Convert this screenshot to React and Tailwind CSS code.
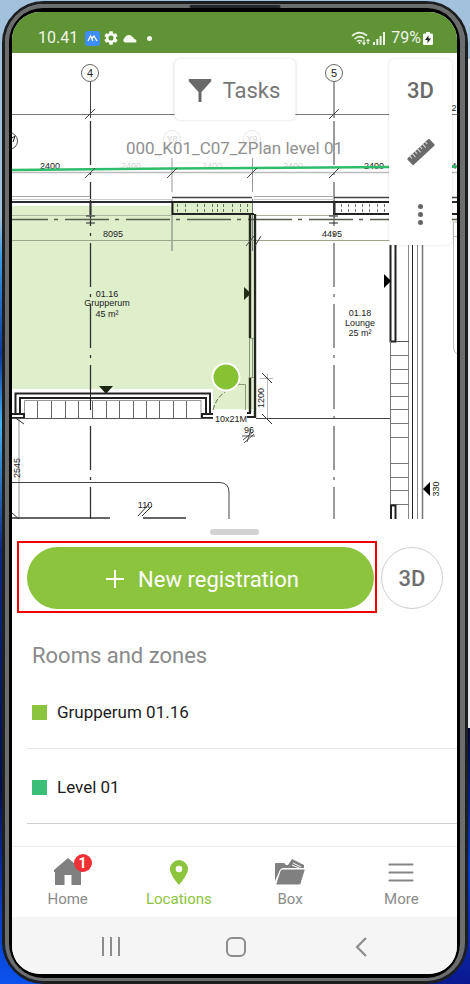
import React from "react";

const DASH = "44 7 3 7";
const PANES = [37, 51, 65, 78, 92, 106, 119, 133, 146, 159, 173, 186];
const RUNGS = [355, 369, 383, 396, 409, 423, 437, 463, 477, 490, 504];
const HATCH_A = [177, 185, 197, 204, 212, 217, 223, 232, 240, 247];
const HATCH_B = [341, 348, 355, 362, 369, 377, 384];

function Slash({ x, y, color = "#444" }) {
  return <path d={`M${x - 5} ${y + 5}L${x + 5} ${y - 5}`} stroke={color} />;
}

function FloorPlan() {
  return (
    <svg
      className="absolute inset-0 h-full w-full font-['Liberation_Sans',Arial,sans-serif]"
      viewBox="12 53 445 466"
      preserveAspectRatio="xMidYMid slice"
      fill="none"
      stroke="#222"
      role="img"
      aria-label="Floor plan level 01"
    >
      <path d="M12 206H172V201H253V409H213V389H12Z" fill="#dfeecb" stroke="none" />

      {/* grid axes */}
      <path d="M12 114.5H457" stroke="#777" />
      <path d="M90.5 82V118M334 82V118" stroke="#444" />
      <path d="M90.5 121V519" strokeDasharray={DASH} stroke="#333" strokeWidth="1.3" />
      <path d="M334 121V519" strokeDasharray={DASH} stroke="#666" strokeWidth="1.3" />
      <circle cx="90" cy="73" r="8.5" fill="#fff" stroke="#666" />
      <circle cx="334" cy="73" r="8.5" fill="#fff" stroke="#666" />
      <circle cx="9" cy="141" r="8.5" stroke="#555" />
      <path d="M12 138L15 136L13 142" />
      <Slash x={90} y={114} />
      <Slash x={334} y={114} />
      <g opacity="0.1">
        <circle cx="172" cy="139" r="8.5" />
        <circle cx="252" cy="139" r="8.5" />
      </g>

      {/* dimension line and level line */}
      <path d="M12 172.5H457" stroke="#bbb" strokeWidth="1.5" />
      <path d="M172 158V192M252.5 158V192" stroke="#999" />
      <path d="M172 199V251M252.5 199V251" stroke="#777" />

      {/* upper wall */}
      <path d="M12 196.5H90M254 196.5H334" stroke="#aaa" />
      <path d="M12 199.5H172M254 199.5H334" stroke="#ccc" />
      <path d="M172 197.5H252M334 197.5H457" stroke="#444" strokeWidth="1.5" />
      <path d="M12 202H457" stroke="#2a2d2f" strokeWidth="2" />
      <path d="M252 202H172.5V214H254" strokeWidth="2" />
      <path d="M389 202H334.5V214H457" strokeWidth="2" />
      {HATCH_A.map((x) => (
        <path key={x} d={`M${x}.5 204V213`} strokeDasharray="3 2" stroke="#667057" />
      ))}
      {HATCH_B.map((x) => (
        <path key={x} d={`M${x}.5 204V213`} strokeDasharray="3 2" stroke="#777" />
      ))}
      <path d="M12 215.5H172M256 215.5H334" stroke="#aab49c" />
      <path d="M4 219.5H457" strokeDasharray="44 6 4 7" stroke="#555e4c" strokeWidth="1.4" />
      <path d="M90.5 202V215M334 202V215" stroke="#333" strokeWidth="2" />
      <path d="M86 216H95M86 223H95M329 216H338M329 223H338" />
      <path d="M12 240.5H390" stroke="#9aa58c" />

      {/* room wall on the right */}
      <path d="M255 214V418M250 214V338M250 377V413" stroke="#1f2a18" strokeWidth="2.4" />
      <path d="M249.5 338V377M252.5 338V377M249 338.5H254M249 377.5H254" stroke="#889678" />
      <path d="M247 413H251M247 417H256" strokeWidth="2" />
      <path d="M244 287V300L251 293.500Z" fill="#222d18" stroke="none" />
      <path d="M246 246L254 236M255 246L261 236" stroke="#444" />

      {/* bay window */}
      <path d="M15 390H213V418H15Z" fill="#fff" stroke="none" />
      <path d="M15.500 413V393.500H210V413" strokeWidth="2" />
      <path d="M20 413V398H206V413" strokeWidth="2" />
      <path d="M24.500 418V400.500H201V418" stroke="#999" />
      <path d="M12 414H24V418H12M213 418H202V414H213" strokeWidth="2" />
      <path d="M12 418.500H213" stroke="#555" />
      {PANES.map((x) => (
        <path key={x} d={`M${x}.5 401V418`} stroke="#666" />
      ))}
      <path d="M90.500 390V410" />
      <path d="M99 386H113L106 394Z" fill="#1d2613" stroke="none" />

      {/* door */}
      <path d="M213 410C215 402 219 396 225 392M230 388L240 384" stroke="#667057" strokeDasharray="5 2" />
      <path d="M239 384.500H245.500V410" stroke="#8a9a76" />
      <path d="M243 440L253 432M244 443L254 434M247 442L251 429M242 436H255" stroke="#555" />
      <path d="M267.500 374V419" stroke="#bbb" />
      <path d="M260 378.500H273" stroke="#bbb" />
      <path d="M262 373L272 383M262 414L272 424" stroke="#333" />
      <path d="M256 418.500H390" stroke="#444" />

      {/* corridor wall */}
      <path d="M390.500 245V341.500H395.500V245" strokeWidth="2" />
      <path d="M390.500 341V519" stroke="#777" />
      <path d="M408.500 245V519" stroke="#888" />
      <path d="M412.500 245V519" stroke="#222" />
      <path d="M417.500 245V519" stroke="#888" />
      <path d="M422.500 245V519" stroke="#777" strokeWidth="1.500" />
      <path d="M396 341.500H409" stroke="#555" />
      {RUNGS.map((y) => (
        <path key={y} d={`M390 ${y}.5H409`} stroke="#777" />
      ))}
      <path d="M391 519V505.500H395.500V519" strokeWidth="2" />
      <path d="M384 274V288L391 281Z" fill="#000" stroke="none" />
      <path d="M430 482V496L423 489Z" fill="#000" stroke="none" />
      <path d="M457 222H453.500V348Q454 353 457 354M453 236.500H457" stroke="#bbb" />

      {/* lower left room */}
      <path d="M19 419V519" stroke="#999" />
      <path d="M14 417L24 424M12 513L20 520" stroke="#333" />
      <path d="M12 482.500H220Q229 483 229 492V519" stroke="#444" />
      <path d="M12 518H110M143 518H186" stroke="#333" strokeWidth="1.500" />
      <path d="M138 516L149 504M142 516L152 506" stroke="#333" />

      <g fill="#222" stroke="none" textAnchor="middle" fontSize="9">
        <text x="90" y="77" fontSize="11">4</text>
        <text x="334" y="77" fontSize="11">5</text>
        <text x="50" y="169">2400</text>
        <text x="374" y="169">2400</text>
        <text x="454" y="169">4</text>
        <text x="454" y="111">2</text>
        <g opacity="0.2">
          <text x="172" y="142">Y8</text>
          <text x="252" y="142">Y9</text>
          <text x="131" y="169">2400</text>
          <text x="212" y="169">2400</text>
          <text x="293" y="169">2400</text>
        </g>
        <text x="113" y="237">8095</text>
        <text x="332" y="237">4495</text>
        <text x="107" y="297">01.16</text>
        <text x="107" y="306">Grupperum</text>
        <text x="107" y="317">45 m²</text>
        <text x="360" y="316">01.18</text>
        <text x="360" y="326">Lounge</text>
        <text x="360" y="336">25 m²</text>
        <text x="231" y="422">10x21M</text>
        <text x="249" y="433">96</text>
        <text x="145" y="508">110</text>
        <text transform="translate(264 398) rotate(-90)">1200</text>
        <text transform="translate(439 489) rotate(-90)">330</text>
        <text transform="translate(20 468) rotate(-90)">2545</text>
      </g>

      <path d="M12 170L172 168.500L457 166.500" stroke="#2fbd6b" strokeWidth="2.500" />
      <Slash x={90} y={173} />
      <Slash x={172} y={173} />
      <Slash x={252} y={173} />
      <Slash x={334} y={173} />
      <circle cx="226" cy="377" r="13.500" fill="#86c232" stroke="#fff" strokeWidth="2" />
    </svg>
  );
}

function StatusBar() {
  return (
    <header className="flex h-[41px] shrink-0 items-center bg-[#5f9335] pt-[11px] pr-6 pl-[26px] text-base text-[#f0f5ea]">
      <span>10.41</span>
      <svg className="ml-[7px]" width="15" height="15" viewBox="0 0 15 15">
        <rect width="15" height="15" rx="3" fill="#3d8ef8" />
        <path d="M3 10L5.500 5L8 10M7 7L9 5L12 10" fill="none" stroke="#fff" strokeWidth="1.300" />
      </svg>
      <svg className="ml-1" width="14" height="14" viewBox="2 2 20 20" fill="#f4faf0">
        <path d="M19.140 12.940c.04-.3.06-.61.06-.94 0-.32-.02-.64-.07-.94l2.030-1.580c.18-.14.23-.41.120-.61l-1.920-3.320c-.12-.22-.37-.29-.59-.22l-2.390.96c-.5-.38-1.030-.7-1.620-.94l-.36-2.540c-.04-.24-.24-.41-.48-.41h-3.840c-.24 0-.43.17-.47.41l-.36 2.540c-.59.24-1.130.57-1.620.94l-2.390-.96c-.22-.08-.47 0-.59.22L2.740 8.870c-.12.21-.08.47.12.61l2.030 1.580c-.05.3-.09.63-.09.94s.02.64.07.94l-2.030 1.580c-.18.14-.23.41-.12.61l1.920 3.320c.12.22.37.29.59.22l2.390-.96c.5.38 1.030.7 1.620.94l.36 2.540c.05.24.24.41.48.41h3.840c.24 0 .44-.17.47-.41l.36-2.540c.59-.24 1.130-.56 1.620-.94l2.390.96c.22.08.47 0 .59-.22l1.920-3.320c.12-.22.07-.47-.12-.61l-2.010-1.580zM12 15.600a3.600 3.600 0 1 1 0-7.200 3.600 3.600 0 0 1 0 7.200z" />
      </svg>
      <svg className="ml-1" width="15" height="9" viewBox="0 0 15 9" fill="#f4faf0">
        <path d="M3 8.500A2.500 2.500 0 0 1 2.500 4A4.500 4.500 0 0 1 10.500 3Q12 3 12 5Q14.500 5 14.500 7Q14.500 8.500 13 8.500Z" />
      </svg>
      <span className="ml-[10px] h-[5px] w-[5px] rounded-full bg-[#f4faf0]" />
      <svg className="ml-auto" width="20" height="15" viewBox="0 0 20 15" fill="none" stroke="#eef5e8" strokeWidth="1.600">
        <path d="M1 5Q8 -1.500 16 4.500M3.500 8Q8.500 3.500 13.500 7.500M6 10.500Q8.500 8.500 11 10.500" />
        <circle cx="8.500" cy="12" r="1" fill="#eef5e8" stroke="none" />
        <path d="M13 8.500V13M11.500 11.500L13 13.500L14.500 11.500M17 13V8.500M15.500 10L17 8.500L18.500 10" strokeWidth="1.100" />
      </svg>
      <svg className="ml-[2px]" width="12" height="13" viewBox="0 0 12 13" fill="#eef5e8">
        <path d="M0 10H2V13H0ZM3.300 7H5.300V13H3.300ZM6.600 4H8.600V13H6.600ZM10 0H12V13H10Z" />
      </svg>
      <span className="ml-[6px]">79%</span>
      <svg className="ml-[2px]" width="10" height="13" viewBox="0 0 10 13">
        <path d="M3 0H7V1.500H9Q10 1.500 10 3V11.500Q10 13 9 13H1Q0 13 0 11.500V3Q0 1.500 1 1.500H3Z" fill="#f4faf0" />
        <path d="M5.500 3.500L2 8H4.500L4.500 11L8 6.500H5.500Z" fill="#222" />
      </svg>
    </header>
  );
}

function PlanView() {
  return (
    <section className="relative min-h-[400px] flex-1 overflow-hidden bg-white">
      <FloorPlan />
      <h1 className="absolute inset-x-0 top-[83px] text-center text-[17px] leading-6 font-normal text-[#909090]">
        000_K01_C07_ZPlan level 01
      </h1>
      <button
        type="button"
        className="absolute top-[6px] left-1/2 flex h-[61px] w-[121px] -translate-x-1/2 items-center justify-center gap-[11px] rounded-md bg-white pt-[2px] text-[22px] text-[#777] shadow-[0_0_3px_rgba(0,0,0,0.15)]"
      >
        <svg width="23" height="23" viewBox="0 0 23 23" fill="#6a6a6a">
          <path d="M0 0H23V2L13 13V23H10V13L0 2Z" />
        </svg>
        Tasks
      </button>
      <div className="absolute top-[6px] right-[5px] flex w-[63px] flex-col rounded-md bg-white text-[#6a6a6a] shadow-[0_0_3px_rgba(0,0,0,0.15)]">
        <button type="button" className="h-[62px] text-[22px] font-medium">3D</button>
        <button type="button" aria-label="Measure" className="flex h-[62px] items-center justify-center">
          <svg width="28" height="28" viewBox="0 0 28 28">
            <g transform="rotate(-43 14 14)">
              <rect x="-1" y="9.500" width="30" height="9" rx="1" fill="#6a6a6a" />
              <path d="M3 9V12.500M6.500 9V14M10 9V12.500M13.500 9V14M17 9V12.500M20.500 9V14M24 9V12.500" stroke="#ddd" strokeWidth="1" />
            </g>
          </svg>
        </button>
        <button type="button" aria-label="More options" className="flex h-[62px] flex-col items-center justify-center gap-[3px]">
          <span className="h-[5px] w-[5px] rounded-full bg-[#666]" />
          <span className="h-[5px] w-[5px] rounded-full bg-[#666]" />
          <span className="h-[5px] w-[5px] rounded-full bg-[#666]" />
        </button>
      </div>
    </section>
  );
}

function ZoneRow({ name, swatch, line }) {
  return (
    <li className={`flex h-[75px] items-center gap-[10px] border-b pt-[3px] pl-[5px] text-[17px] text-[#1c1c1c] ${line}`}>
      <span className={`h-[15px] w-[15px] ${swatch}`} />
      {name}
    </li>
  );
}

function Sheet() {
  return (
    <section className="shrink-0 bg-white pt-[10px] pb-[22px]">
      <div className="mx-auto h-[6px] w-[49px] rounded-full bg-[#d2d2d2]" />
      <div className="mt-[6px] flex items-end gap-1 pr-[14px] pl-[5px]">
        <div className="flex-1 border-2 border-[#f00000] pt-1 pr-px pb-[2px] pl-2">
          <button
            type="button"
            className="flex h-[62px] w-full items-center justify-center gap-[14px] rounded-full bg-[#8cc43e] pt-[2px] pl-1 text-[22px] text-white"
          >
            <svg width="18" height="18" viewBox="0 0 18 18" stroke="#fff" strokeWidth="2">
              <path d="M9 0V18M0 9H18" />
            </svg>
            New registration
          </button>
        </div>
        <button
          type="button"
          className="mb-1 h-[62px] w-[62px] shrink-0 rounded-full border border-[#cfcfcf] text-[22px] font-medium text-[#6f6f6f]"
        >
          3D
        </button>
      </div>
      <h2 className="mt-[29px] pl-5 text-[22px] leading-7 font-normal text-[#8a8a8a]">Rooms and zones</h2>
      <ul className="mt-1 ml-[15px]">
        <ZoneRow name="Grupperum 01.16" swatch="bg-[#8cc43e]" line="border-[#e8e8e8]" />
        <ZoneRow name="Level 01" swatch="bg-[#3bbf76]" line="border-[#d0d0d0]" />
      </ul>
    </section>
  );
}

function Tab({ label, active, badge, children }) {
  return (
    <a
      href="#"
      aria-current={active ? "page" : undefined}
      className={`flex flex-col items-center pt-[11px] text-[15px] leading-[26px] ${active ? "text-[#8cc43e]" : "text-[#8a8a8a]"}`}
    >
      <span className="relative flex h-[28px] items-center justify-center">
        {children}
        {badge && (
          <span className="absolute -top-1 -right-[10px] flex h-[18px] w-[18px] items-center justify-center rounded-full bg-[#f03035] text-sm font-bold text-white">
            {badge}
          </span>
        )}
      </span>
      {label}
    </a>
  );
}

function TabBar() {
  return (
    <nav className="grid h-[71px] shrink-0 grid-cols-4 border-t border-[#ececec] bg-white">
      <Tab label="Home" badge="1">
        <svg width="28" height="28" viewBox="0 0 28 28" fill="#808080">
          <path d="M14 0L28 12V14H27V27H17.500V17H10.500V27H1V14H0V12Z" />
        </svg>
      </Tab>
      <Tab label="Locations" active>
        <svg width="18" height="25" viewBox="0 0 18 25" fill="#8cc43e">
          <path fillRule="evenodd" d="M9 0A9 9 0 0 1 18 9C18 15 9 25 9 25S0 15 0 9A9 9 0 0 1 9 0ZM9 5.700A3.300 3.300 0 1 0 9 12.300A3.300 3.300 0 1 0 9 5.700Z" />
        </svg>
      </Tab>
      <Tab label="Box">
        <svg width="30" height="26" viewBox="0 0 30 26" fill="#808080">
          <path d="M0 22V5Q0 4 1 4H9L11 6H13L17 0L29 6V9H9Q6 9 5 11Z" />
          <path d="M17 6L24 9M18 4L26 8" stroke="#fff" strokeWidth="1" />
          <path d="M8 10H29Q30.500 10 30 11.500L26 24.500Q25.500 26 24 26H2Q.5 26 1 24.500L5 12Q6 10 8 10Z" stroke="#fff" strokeWidth="1" />
        </svg>
      </Tab>
      <Tab label="More">
        <svg width="26" height="19" viewBox="0 0 26 19" stroke="#858585" strokeWidth="2.200" strokeLinecap="round">
          <path d="M1.500 1.500H24.500M1.500 9.500H24.500M1.500 17.500H24.500" />
        </svg>
      </Tab>
    </nav>
  );
}

function SystemBar() {
  return (
    <footer className="grid h-[57px] shrink-0 grid-cols-3 bg-[#f5f5f5] pt-[2px] pr-[34px] pl-9">
      <button type="button" aria-label="Recent apps" className="flex items-center justify-center">
        <svg width="18" height="19" viewBox="0 0 18 19" stroke="#8c8c8c" strokeWidth="2">
          <path d="M1 0V19M9 0V19M17 0V19" />
        </svg>
      </button>
      <button type="button" aria-label="Home screen" className="flex items-center justify-center">
        <span className="h-5 w-5 rounded-md border-2 border-[#8c8c8c]" />
      </button>
      <button type="button" aria-label="Back" className="flex items-center justify-center">
        <svg width="12" height="20" viewBox="0 0 12 20" fill="none" stroke="#8c8c8c" strokeWidth="2.200">
          <path d="M11 1L2 10L11 19" />
        </svg>
      </button>
    </footer>
  );
}

export default function App() {
  return (
    <div className="flex min-h-screen pt-px pr-[2px] pl-[2px] font-[Roboto,sans-serif] [background:linear-gradient(#a3c1dc_0,#a3c1dc_22%,#3d9be6_26%,#0a3a9c_36%,#49b0f0_43%,#0a2a80_56%,#02104e_80%,#0a3fc4_93%,#0b52ee_100%)_left/50%_100%_no-repeat,linear-gradient(#a3c1dc_0,#a3c1dc_6%,#e6e8ec_6%,#e6e8ec_74%,#020838_74%,#0838c8_88%,#0a1a90_100%)_right/50%_100%_no-repeat]">
      <div className="relative flex min-w-0 flex-1 rounded-[42px] border-[3px] border-[#1d1e20]">
        <span className="absolute top-px left-1/2 h-[3px] w-[91px] -translate-x-1/2 rounded-full bg-[#26272b]" />
        <div className="flex min-w-0 flex-1 rounded-[38px] border-4 border-r-[5px] border-b-[3px] border-[#6c6d6d] bg-black pt-1 pr-[3px] pb-1 pl-[3px]">
          <div className="flex min-w-0 flex-1 flex-col overflow-hidden rounded-[28px] bg-white">
            <StatusBar />
            <PlanView />
            <Sheet />
            <TabBar />
            <SystemBar />
          </div>
        </div>
      </div>
    </div>
  );
}
